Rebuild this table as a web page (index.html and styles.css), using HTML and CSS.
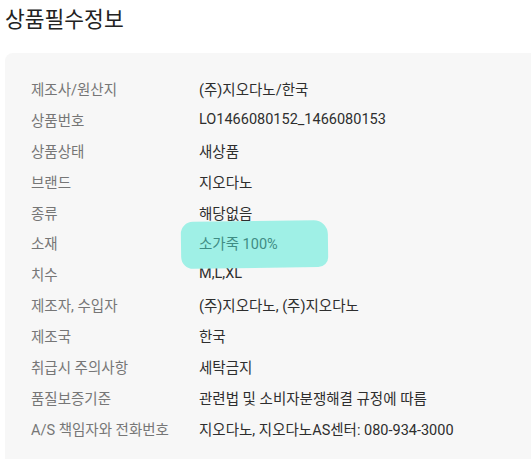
FILE: index.html
```html
<!DOCTYPE html>
<html lang="ko">
<head>
  <meta charset="UTF-8" />
  <meta name="viewport" content="width=device-width, initial-scale=1.0"/>
  <title>상품필수정보</title>
  <link rel="stylesheet" href="styles.css">
</head>
<body>
  <h1 class="title">상품필수정보</h1>

  <div class="info-card">
    <dl class="info-list">
      <dt>제조사/원산지</dt>
      <dd>(주)지오다노/한국</dd>
      <dt>상품번호</dt>
      <dd>LO1466080152_1466080153</dd>
      <dt>상품상태</dt>
      <dd>새상품</dd>
      <dt>브랜드</dt>
      <dd>지오다노</dd>
      <dt>종류</dt>
      <dd>해당없음</dd>
      <dt>소재</dt>
      <dd class="marked">소가죽 100%</dd>
      <dt>치수</dt>
      <dd>M,L,XL</dd>
      <dt>제조자, 수입자</dt>
      <dd>(주)지오다노, (주)지오다노</dd>
      <dt>제조국</dt>
      <dd>한국</dd>
      <dt>취급시 주의사항</dt>
      <dd>세탁금지</dd>
      <dt>품질보증기준</dt>
      <dd>관련법 및 소비자분쟁해결 규정에 따름</dd>
      <dt>A/S 책임자와 전화번호</dt>
      <dd>지오다노, 지오다노AS센터: 080-934-3000</dd>
    </dl>
  </div>
</body>
</html>
```

FILE: styles.css
```css
html, body {
  margin: 0;
  padding: 0;
  overflow: hidden;
}

body {
  font-family: Roboto, "Noto Sans CJK KR", sans-serif;
  background: #ffffff;
  color: #2e2e2e;
  padding-left: 5px;
}

.title {
  margin: 7px 0 0;
  font-size: 21.5px;
  font-weight: normal;
  line-height: 26px;
  color: #222;
}

.info-card {
  margin-top: 20px;
  background: #f7f7f7;
  border-radius: 8px 0 0 0;
  padding: 20px 0 30px 26px;
}

.info-list {
  margin: 0;
  display: grid;
  grid-template-columns: 168px 1fr;
  grid-auto-rows: 30.9px;
  align-items: center;
  font-size: 14.5px;
}

.info-list dt {
  color: #767676;
}

.info-list dd {
  margin: 0;
  color: #2e2e2e;
}

.marked {
  position: relative;
  z-index: 0;
  color: #3f8c84 !important;
}

/* highlighter mark over the material row */
.marked::before {
  content: "";
  position: absolute;
  left: -18px;
  top: -11px;
  width: 147px;
  height: 47px;
  background: #9ff0e6;
  border-radius: 12px 14px 10px 12px;
  transform: rotate(-0.8deg);
  z-index: -1;
}
```
